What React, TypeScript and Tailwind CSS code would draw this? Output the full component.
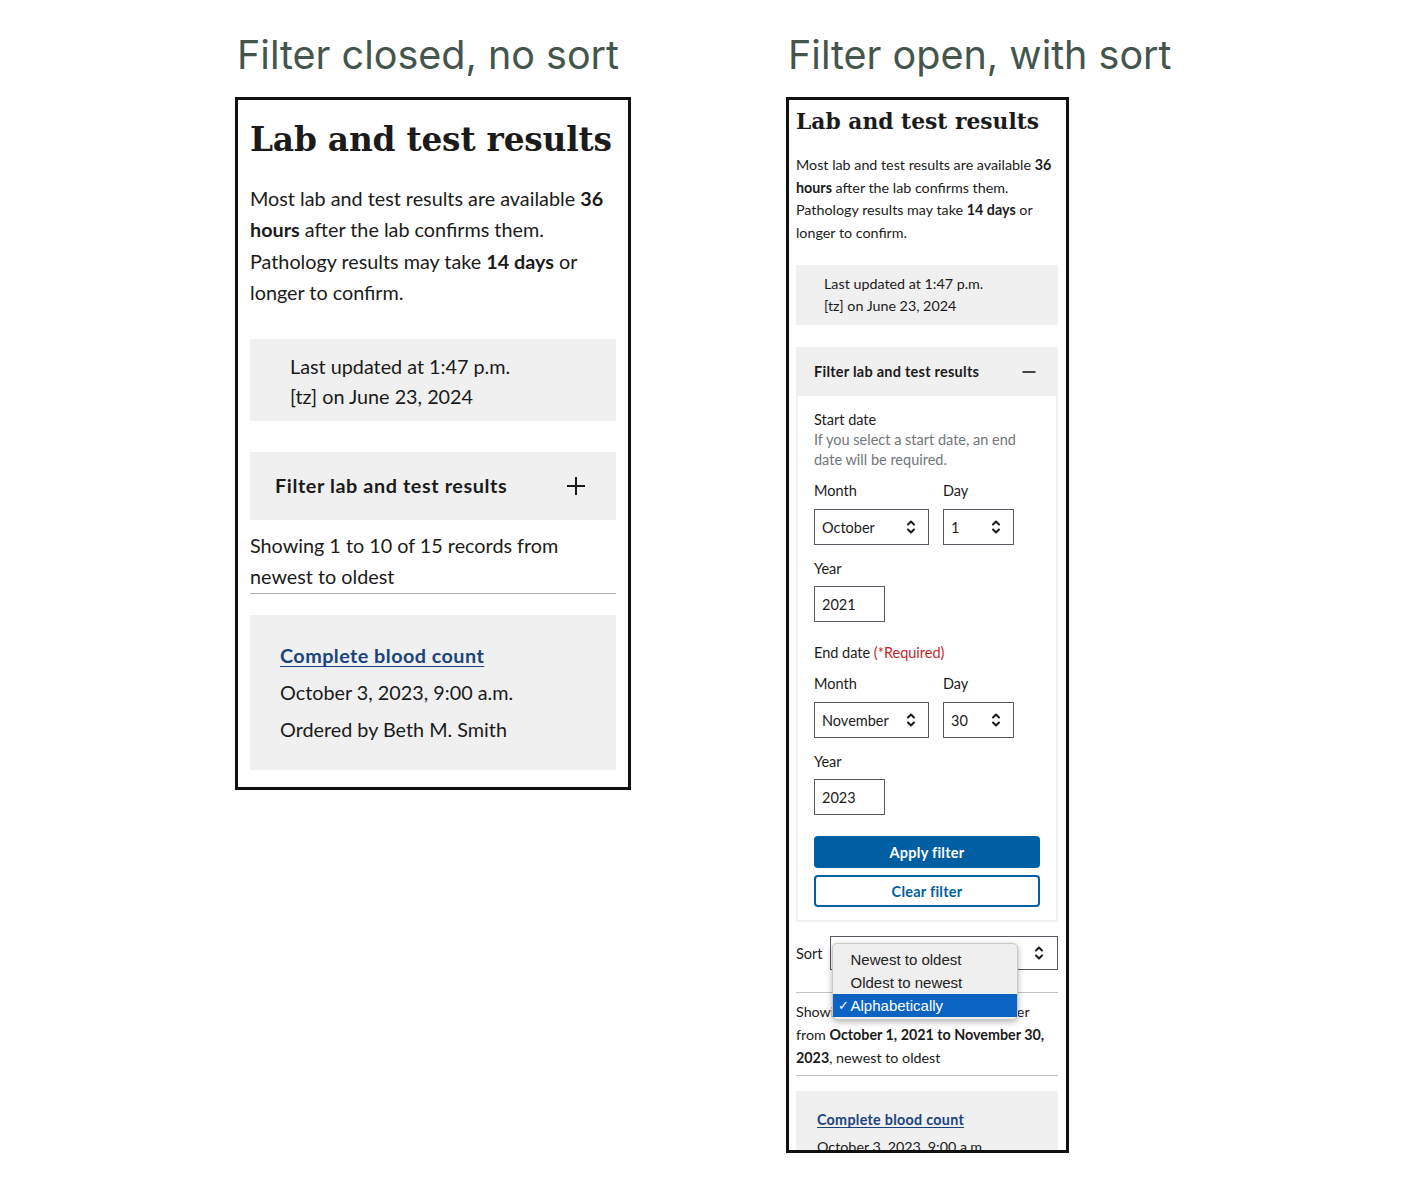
import React from "react";

const body = { fontFamily: "Lato, 'Noto Sans', sans-serif" };
const serif = { fontFamily: "'DejaVu Serif', 'Liberation Serif', serif" };

function Arrows({ className = "" }: { className?: string }) {
  return (
    <svg width="10" height="16" viewBox="0 0 10 16" className={className} fill="none" stroke="#1b1b1b" strokeWidth="2" strokeLinecap="round" strokeLinejoin="round">
      <path d="M2 5.5 L5 2.5 L8 5.5" />
      <path d="M2 10.5 L5 13.5 L8 10.5" />
    </svg>
  );
}

function Select({ value, w }: { value: string; w: string }) {
  return (
    <div className={`${w} h-[36px] border border-[#565c65] bg-white flex items-center justify-between pl-[7px] pr-[12px] text-[14.5px] text-[#1b1b1b]`}>
      <span>{value}</span>
      <Arrows />
    </div>
  );
}

function DateGroup({ month, day, year }: { month: string; day: string; year: string }) {
  return (
    <div>
      <div className="flex gap-[14px] mt-[11px] leading-[20px] text-[14.5px] text-[#1b1b1b]">
        <div className="w-[115px]">Month</div>
        <div>Day</div>
      </div>
      <div className="flex gap-[14px] mt-[8px]">
        <Select value={month} w="w-[115px]" />
        <Select value={day} w="w-[71px]" />
      </div>
      <div className="mt-[14px] leading-[20px] text-[14.5px] text-[#1b1b1b]">Year</div>
      <div className="mt-[7px] w-[71px] h-[36px] border border-[#565c65] flex items-center pl-[7px] text-[14.5px] text-[#1b1b1b]">
        {year}
      </div>
    </div>
  );
}

function LeftPanel() {
  return (
    <div className="w-[396px] h-[693px] border-[3px] border-[#111] px-[12px] text-[#1b1b1b]" style={body}>
      <h1 className="pt-[20px] text-[32.8px] leading-[40px] font-bold tracking-[-0.2px] whitespace-nowrap" style={serif}>
        Lab and test results
      </h1>
      <p className="mt-[23px] text-[19.8px] leading-[31.3px]">
        Most lab and test results are available <b>36 hours</b> after the lab confirms them. Pathology results may take <b>14 days</b> or longer to confirm.
      </p>
      <div className="mt-[31px] bg-[#f0f0f0] pl-[40px] pt-[12px] pb-[10px] text-[19.8px] leading-[30px]">
        <div>Last updated at 1:47 p.m.</div>
        <div>[tz] on June 23, 2024</div>
      </div>
      <div className="mt-[31px] h-[68px] bg-[#f0f0f0] flex items-center justify-between pl-[25px] pr-[30px]">
        <span className="text-[19.8px] font-bold tracking-[0.6px]">Filter lab and test results</span>
        <svg width="20" height="20" viewBox="0 0 20 20" stroke="#1b1b1b" strokeWidth="2">
          <path d="M10 1 V19 M1 10 H19" />
        </svg>
      </div>
      <p className="mt-[10px] text-[19.8px] leading-[31px] border-b border-[#a9aeb1] pb-[1px]">
        Showing 1 to 10 of 15 records from newest to oldest
      </p>
      <div className="mt-[21px] bg-[#f0f0f0] pl-[30px] pt-[22px] pb-[22px] text-[19.8px] leading-[37px]">
        <a href="#" className="font-bold tracking-[0.45px] text-[#1a4480] underline underline-offset-[3px]">Complete blood count</a>
        <div>October 3, 2023, 9:00 a.m.</div>
        <div>Ordered by Beth M. Smith</div>
      </div>
    </div>
  );
}

function RightPanel() {
  return (
    <div className="w-[283px] h-[1056px] border-[3px] border-[#111] pl-[7px] pr-[8px] overflow-hidden text-[#1b1b1b]" style={body}>
      <h1 className="pt-[8px] text-[21.8px] leading-[28px] font-bold whitespace-nowrap" style={serif}>
        Lab and test results
      </h1>
      <p className="mt-[18px] text-[14.3px] leading-[22.6px]">
        Most lab and test results are available <b>36 hours</b> after the lab confirms them. Pathology results may take <b>14 days</b> or longer to confirm.
      </p>
      <div className="mt-[21px] bg-[#f0f0f0] pl-[28px] py-[8px] text-[14.3px] leading-[22px]">
        <div>Last updated at 1:47 p.m.</div>
        <div>[tz] on June 23, 2024</div>
      </div>
      <div className="mt-[22px]">
        <div className="h-[49px] bg-[#f0f0f0] flex items-center justify-between pl-[18px] pr-[22px]">
          <span className="text-[14.5px] font-bold tracking-[0.25px]">Filter lab and test results</span>
          <svg width="14" height="14" viewBox="0 0 14 14" stroke="#1b1b1b" strokeWidth="1.6">
            <path d="M0.5 7 H13.5" />
          </svg>
        </div>
        <div className="border-2 border-t-0 border-[#f0f0f0] px-[16px] pt-[14px] pb-[13px]">
          <div className="text-[14.5px] leading-[20px]">Start date</div>
          <div className="text-[14.5px] leading-[20px] text-[#71767a]">If you select a start date, an end date will be required.</div>
          <DateGroup month="October" day="1" year="2021" />
          <div className="mt-[21px] text-[14.5px] leading-[20px]">
            End date <span className="text-[#c8262a]">(*Required)</span>
          </div>
          <DateGroup month="November" day="30" year="2023" />
          <button className="mt-[21px] w-full h-[32px] rounded-[4px] bg-[#005ea2] text-white font-bold tracking-[0.25px] text-[14.5px]">Apply filter</button>
          <button className="mt-[7px] w-full h-[32px] rounded-[4px] border-2 border-[#005ea2] text-[#005ea2] font-bold tracking-[0.25px] text-[14.5px] bg-white">Clear filter</button>
        </div>
      </div>
      <div className="mt-[14px] flex items-center gap-[7px]">
        <span className="text-[14.5px]">Sort</span>
        <div className="relative flex-1 h-[34px] border border-[#565c65] flex items-center justify-end pr-[13px]">
          <Arrows />
          <div
            className="absolute left-[1px] top-[6px] w-[186px] rounded-[5px] bg-[#efefef] border border-[#c9c9c9] shadow-[0_2px_6px_rgba(0,0,0,0.3)] pt-[4px] pb-[2px] z-10 text-[15px] text-[#222]"
            style={{ fontFamily: "'Liberation Sans', Arial, sans-serif" }}
          >
            <div className="h-[23px] flex items-center pl-[18px]">Newest to oldest</div>
            <div className="h-[23px] flex items-center pl-[18px]">Oldest to newest</div>
            <div className="h-[23px] flex items-center pl-[5px] bg-[#0b64c4] text-white">
              <span className="w-[13px] text-[13px]">✓</span>Alphabetically
            </div>
          </div>
        </div>
      </div>
      <p className="mt-[22px] border-t border-[#c4c4c4] pt-[7px] pb-[6px] border-b text-[14.3px] leading-[23px]">
        Showing 1 to 5 of 15 records in order
        <br />
        from <b>October 1, 2021 to November 30, 2023</b>, newest to oldest
      </p>
      <div className="mt-[15px] bg-[#f0f0f0] pl-[21px] pt-[18px] pb-[20px] text-[14.3px] leading-[22px]">
        <a href="#" className="font-bold tracking-[0.3px] text-[#1a4480] underline underline-offset-2">Complete blood count</a>
        <div className="mt-[5px]">October 3, 2023, 9:00 a.m.</div>
        <div className="mt-[5px]">Ordered by Beth M. Smith</div>
      </div>
    </div>
  );
}

export default function App() {
  return (
    <div className="w-[1410px] h-[1182px] bg-white flex pl-[235px] gap-[155px]">
      <div className="w-[396px]">
        <div className="mt-[35px] h-[40px] leading-[40px] pl-[2px] text-[39.5px] text-[#44554d] whitespace-nowrap" style={{ fontFamily: "Inter, sans-serif" }}>
          Filter closed, no sort
        </div>
        <div className="mt-[22px]">
          <LeftPanel />
        </div>
      </div>
      <div className="w-[283px]">
        <div className="mt-[35px] h-[40px] leading-[40px] pl-[2px] text-[39.5px] text-[#44554d] whitespace-nowrap" style={{ fontFamily: "Inter, sans-serif" }}>
          Filter open, with sort
        </div>
        <div className="mt-[22px]">
          <RightPanel />
        </div>
      </div>
    </div>
  );
}
